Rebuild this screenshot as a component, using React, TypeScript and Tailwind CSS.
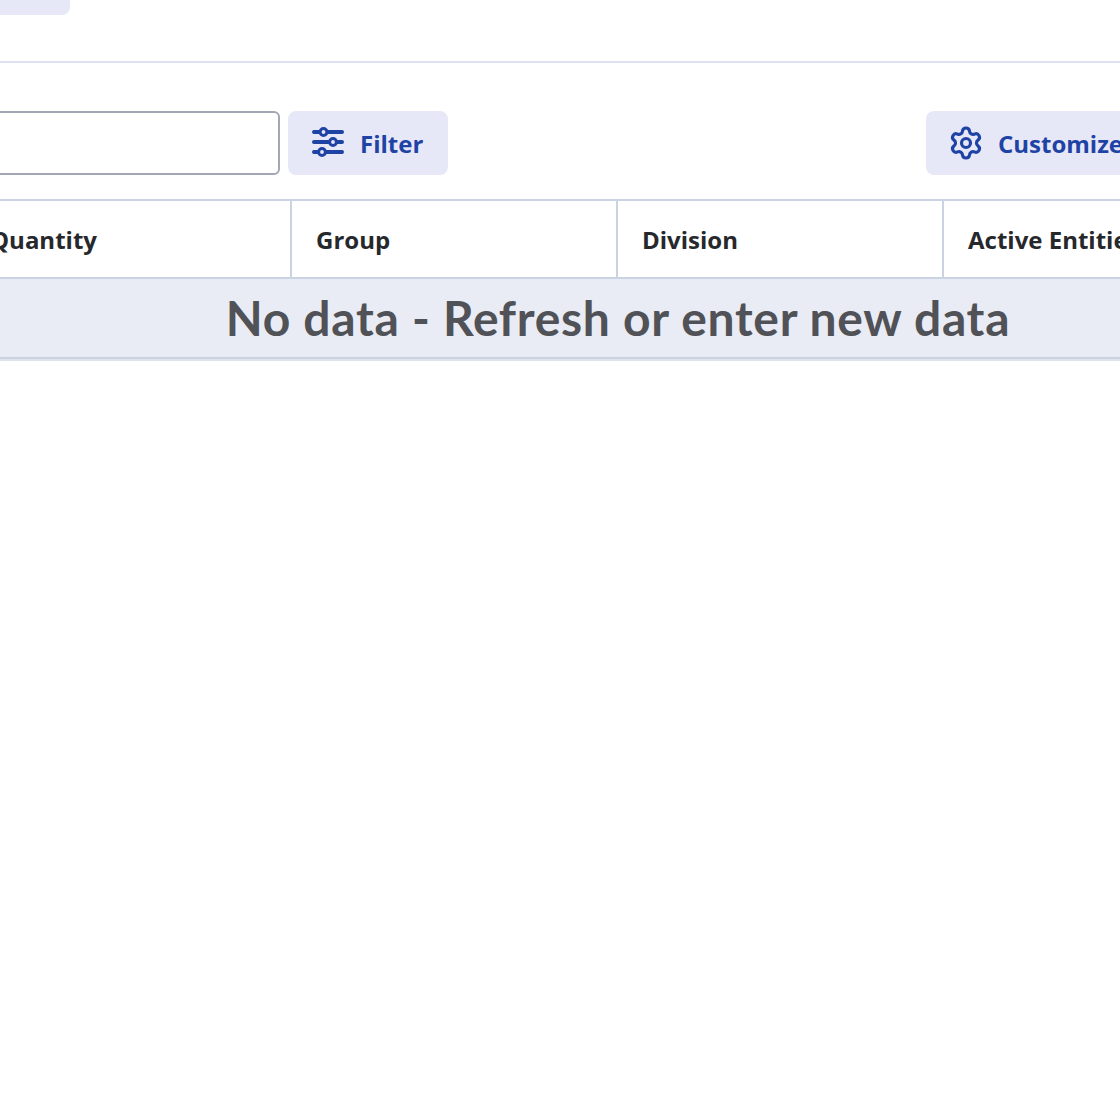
import { Settings } from 'lucide-react';

function FilterIcon() {
  return (
    <svg width="32" height="32" viewBox="0 0 32 32" fill="none" stroke="#1f43a5" strokeWidth="4" strokeLinecap="round">
      <path d="M2 5h28M2 15h28M2 25h28" />
      <circle cx="11.5" cy="5" r="3.4" fill="#e6e8f7" strokeWidth="3" />
      <circle cx="21" cy="15" r="3.4" fill="#e6e8f7" strokeWidth="3" />
      <circle cx="10" cy="25" r="3.4" fill="#e6e8f7" strokeWidth="3" />
    </svg>
  );
}

export default function App() {
  return (
    <div className="h-[1120px] w-[1120px] overflow-hidden bg-white font-['Open_Sans',sans-serif]">
      <div className="h-[15px] w-[70px] rounded-br-lg bg-[#e6e8f7]" />
      <div className="mt-[46px] h-[2px] bg-[#dfe1f2]" />

      {/* Toolbar */}
      <div className="mt-[48px] flex h-[64px]">
        <div className="-ml-[20px] w-[300px] shrink-0 rounded-md border-2 border-[#a3a7b5]" />
        <button className="ml-2 flex w-[160px] shrink-0 items-center gap-4 rounded-lg bg-[#e6e8f7] pl-6 text-2xl font-bold text-[#1f43a5]">
          <FilterIcon />
          <span className="pt-[2px]">Filter</span>
        </button>
        <button className="ml-[478px] flex w-[220px] shrink-0 items-center gap-[14px] rounded-lg bg-[#e6e8f7] pl-[22px] text-2xl font-bold text-[#1f43a5]">
          <Settings size={36} strokeWidth={2.1} />
          <span className="pt-[2px]">Customize</span>
        </button>
      </div>

      {/* Table */}
      <div className="mt-[24px] w-[1120px] border-t-2 border-[#cbd3e3]">
        <div className="flex h-[76px] text-2xl font-bold text-[#27282c]">
          <div className="-ml-[34px] flex w-[326px] shrink-0 items-center border-r-2 border-[#cbd3e3] pl-6 pt-[2px]">Quantity</div>
          <div className="flex w-[326px] shrink-0 items-center border-r-2 border-[#cbd3e3] pl-6 pt-[2px]">Group</div>
          <div className="flex w-[326px] shrink-0 items-center border-r-2 border-[#cbd3e3] pl-6 pt-[2px]">Division</div>
          <div className="flex w-[326px] shrink-0 items-center whitespace-nowrap pl-6 pt-[2px]">Active Entities</div>
        </div>
        <div className="flex h-[82px] w-[1236px] items-center justify-center border-y-2 border-[#cbd3e3] bg-[#e9ecf4] font-['Lato',sans-serif] text-[48px] font-bold tracking-[0.7px] text-[#505257]">
          No data - Refresh or enter new data
        </div>
        <div className="h-[2px] bg-[#dfe3ed]" />
      </div>
    </div>
  );
}
